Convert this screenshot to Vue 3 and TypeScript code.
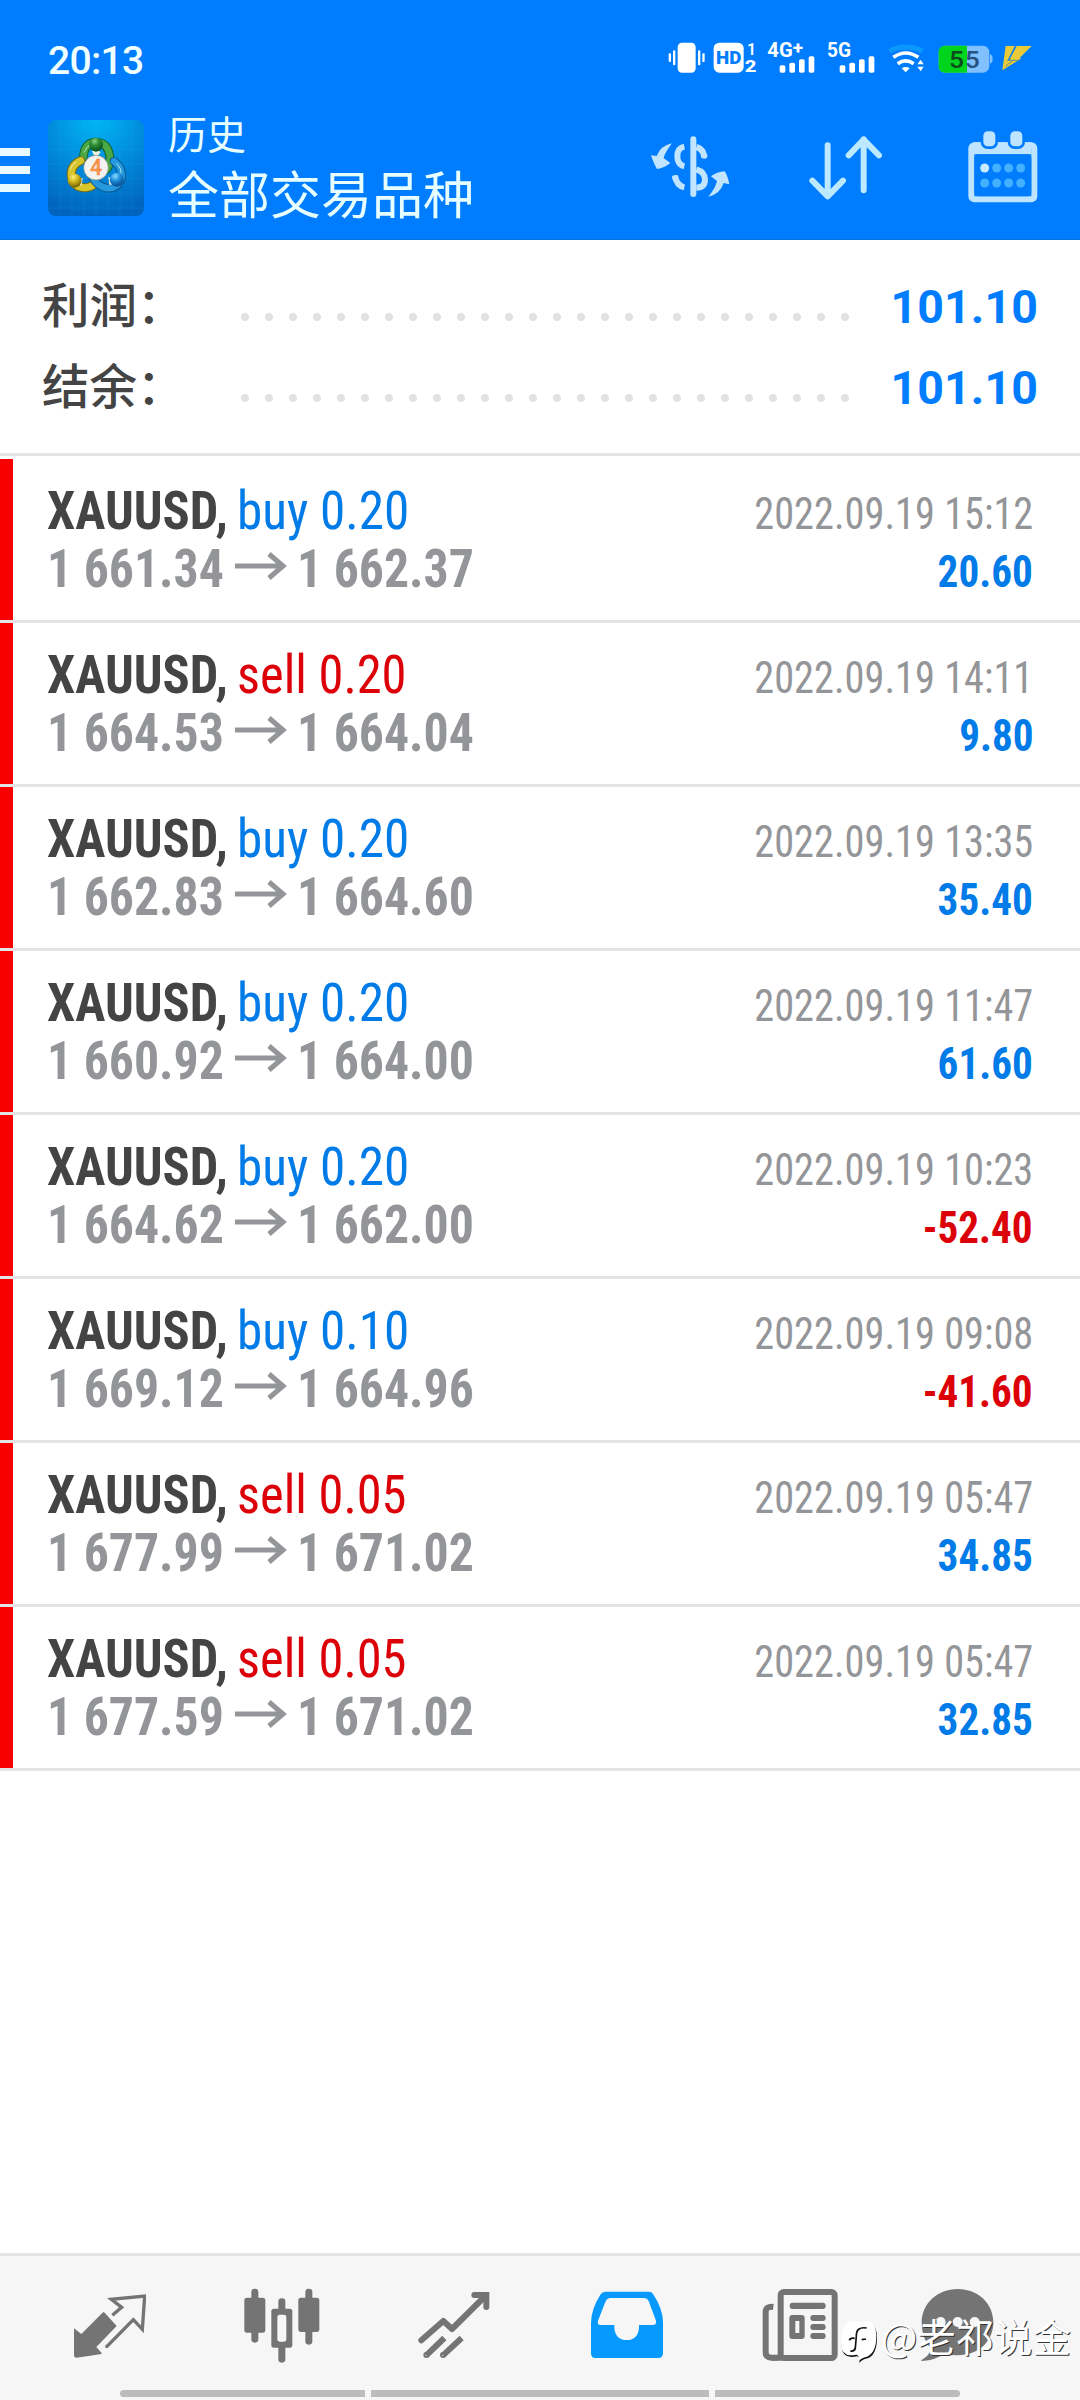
<script setup lang="ts">
interface Deal {
  side: 'buy' | 'sell'
  volume: string
  open: string
  close: string
  time: string
  profit: string
}

const deals: Deal[] = [
  { side: 'buy', volume: '0.20', open: '1 661.34', close: '1 662.37', time: '2022.09.19 15:12', profit: '20.60' },
  { side: 'sell', volume: '0.20', open: '1 664.53', close: '1 664.04', time: '2022.09.19 14:11', profit: '9.80' },
  { side: 'buy', volume: '0.20', open: '1 662.83', close: '1 664.60', time: '2022.09.19 13:35', profit: '35.40' },
  { side: 'buy', volume: '0.20', open: '1 660.92', close: '1 664.00', time: '2022.09.19 11:47', profit: '61.60' },
  { side: 'buy', volume: '0.20', open: '1 664.62', close: '1 662.00', time: '2022.09.19 10:23', profit: '-52.40' },
  { side: 'buy', volume: '0.10', open: '1 669.12', close: '1 664.96', time: '2022.09.19 09:08', profit: '-41.60' },
  { side: 'sell', volume: '0.05', open: '1 677.99', close: '1 671.02', time: '2022.09.19 05:47', profit: '34.85' },
  { side: 'sell', volume: '0.05', open: '1 677.59', close: '1 671.02', time: '2022.09.19 05:47', profit: '32.85' },
]

const totals = [
  { label: '利润', value: '101.10' },
  { label: '结余', value: '101.10' },
]

const calendarDots = [1093, 1129, 1165, 1201]
</script>

<template>
  <div class="screen">
    <header class="header">
      <div class="status">
        <span class="clock">20:13</span>
        <svg class="status-icons" width="366" height="54" viewBox="145 34 1098 162">
          <g fill="#fff">
            <rect x="174" y="69" width="54" height="90" rx="13" />
            <rect x="160" y="92" width="7" height="45" rx="3" />
            <rect x="147" y="101" width="7" height="26" rx="3" />
            <rect x="235" y="92" width="7" height="45" rx="3" />
            <rect x="248" y="101" width="7" height="26" rx="3" />
            <rect x="282" y="69" width="90" height="90" rx="17" />
            <rect x="480" y="137" width="17" height="22" rx="5" />
            <rect x="509" y="129" width="17" height="30" rx="5" />
            <rect x="538" y="119" width="17" height="40" rx="5" />
            <rect x="567" y="110" width="17" height="49" rx="5" />
            <rect x="660" y="137" width="17" height="22" rx="5" />
            <rect x="689" y="129" width="17" height="30" rx="5" />
            <rect x="718" y="119" width="17" height="40" rx="5" />
            <rect x="747" y="110" width="17" height="49" rx="5" />
            <path d="M846 146q12-8 24 0l-12 12zM893 134h19l-9-14zM893 141h19l-9 14z" />
          </g>
          <g class="glyph" fill="#fff">
            <text x="289" y="134" fill="#007dff" font-size="56" font-weight="900" textLength="76" lengthAdjust="spacingAndGlyphs">HD</text>
            <text x="382" y="105" font-size="50" font-weight="600" textLength="27" lengthAdjust="spacingAndGlyphs">1</text>
            <text x="375" y="156" font-size="50" font-weight="800" textLength="35" lengthAdjust="spacingAndGlyphs">2</text>
            <text x="443" y="113" font-size="60" font-weight="700" textLength="76" lengthAdjust="spacingAndGlyphs">4G</text>
            <text x="519" y="100" font-size="48" font-weight="800" textLength="31" lengthAdjust="spacingAndGlyphs">+</text>
            <text x="622" y="113" font-size="60" font-weight="700" textLength="72" lengthAdjust="spacingAndGlyphs">5G</text>
          </g>
          <g fill="none" stroke="#fff" stroke-width="11">
            <path d="M821 113q37-26 75 0" />
            <path d="M834 132q24-17 48 0" />
          </g>
          <path d="M809 94q49-24 100 0" fill="none" stroke="#0a98ff" stroke-width="15" />
          <rect x="957" y="78" width="152" height="81" rx="20" fill="#80c0ff" />
          <path d="M1111 104q8 2 8 14t-8 14z" fill="#80c0ff" />
          <path d="M1042 78h-65q-20 0-20 20v41q0 20 20 20h65z" fill="#00d41c" />
          <text class="glyph" x="988" y="146" font-size="74" font-weight="500" fill="#0d4a20" textLength="45" lengthAdjust="spacingAndGlyphs">5</text>
          <text class="glyph" x="1035" y="146" font-size="74" font-weight="500" fill="#27527f" textLength="45" lengthAdjust="spacingAndGlyphs">5</text>
          <path d="M1158 79h27l-21 43h9l-25 30zM1191 79h45l-37 37h7l-58 36 26-33h-4z" fill="#e9cb3a" />
          <path d="M1162 122h36M1158 140l22-18" fill="none" stroke="#5f8f8a" stroke-width="3" />
        </svg>
      </div>

      <div class="toolbar">
        <div class="menu"><i></i><i></i><i></i></div>
        <svg class="logo" width="96" height="96" viewBox="144 60 288 288">
          <defs>
            <radialGradient id="tile" cx=".5" cy="0" r="1">
              <stop offset="0" stop-color="#00b6f4" />
              <stop offset=".5" stop-color="#008bdc" />
              <stop offset="1" stop-color="#0064bd" />
            </radialGradient>
            <radialGradient id="green" cx=".4" cy=".25" r=".7">
              <stop offset="0" stop-color="#8fd688" />
              <stop offset=".4" stop-color="#329337" />
              <stop offset="1" stop-color="#0b5522" />
            </radialGradient>
            <radialGradient id="gold" cx=".4" cy=".25" r=".7">
              <stop offset="0" stop-color="#fff37c" />
              <stop offset=".5" stop-color="#ceb318" />
              <stop offset="1" stop-color="#78680a" />
            </radialGradient>
            <radialGradient id="azure" cx=".4" cy=".25" r=".7">
              <stop offset="0" stop-color="#8bdcff" />
              <stop offset=".5" stop-color="#1c8ed8" />
              <stop offset="1" stop-color="#075094" />
            </radialGradient>
          </defs>
          <rect x="144" y="60" width="288" height="288" rx="24" fill="url(#tile)" />
          <path d="M180 60v288M216 60v288M252 60v288M288 60v288M324 60v288M360 60v288M396 60v288M144 104h288M144 148h288M144 192h288M144 236h288M144 280h288M144 324h288" stroke="#35b7eb" stroke-opacity=".2" stroke-width="2" />
          <g fill="none" stroke-linecap="round">
            <path d="M250 172q2-43 37-46 38 1 43 47 0 20-10 35" stroke="#12632c" stroke-width="26" />
            <path d="M250 172q2-43 37-46 38 1 43 47 0 20-10 35" stroke="#4aa845" stroke-width="20" />
            <path d="M242 182q-31 14-28 47 7 35 44 34 12-1 20-7" stroke="#746b13" stroke-width="27" />
            <path d="M242 182q-31 14-28 47 7 35 44 34 12-1 20-7" stroke="#d8c52c" stroke-width="21" />
            <path d="M342 184q27 19 22 52-12 32-46 28-26-6-39-30" stroke="#0b5891" stroke-width="26" />
            <path d="M342 184q27 19 22 52-12 32-46 28-26-6-39-30" stroke="#2598de" stroke-width="20" />
            <path d="M253 156q10-22 24-24M211 208q4-16 18-22M350 191q15 15 13 28" stroke="#e6ffe8" stroke-opacity=".7" stroke-width="3" />
          </g>
          <path d="M276 154l12-8 14 11-9 10h-10zM234 235l14 0-3 22-13-4zM325 231l13 3 6 20-16 0z" fill="#edf3db" />
          <circle cx="288" cy="134" r="21" fill="url(#green)" />
          <circle cx="224" cy="242" r="21" fill="url(#gold)" />
          <circle cx="350" cy="239" r="21" fill="url(#azure)" />
          <circle cx="288" cy="203" r="37" fill="#f3f3f1" stroke="#7d8872" stroke-width="2" />
          <text class="glyph" x="270" y="224" font-size="64" font-weight="500" fill="#ff994d" stroke="#e77834" textLength="36" lengthAdjust="spacingAndGlyphs">4</text>
        </svg>
        <div class="titles">
          <span class="section">历史</span>
          <span class="symbols">全部交易品种</span>
        </div>
        <svg class="act currency" width="80" height="62" viewBox="92 346 240 186" fill="#c1e5ff">
          <path d="M92 404l17 2q12-31 46-38-22 29-25 44l20 15q-18 15-40 18-8-12-18-41z" />
          <path d="M327 491l-17-4q-11 34-46 41 23-28 26-47l-18-14q18-14 41-15 9 13 14 39z" />
          <rect x="210" y="347" width="18" height="182" rx="9" />
          <g fill="none" stroke="#c1e5ff" stroke-width="18">
            <path d="M192 378q-21 4-21 29t21 30M192 500q-24-5-28-35M228 379q22 6 24 32M228 446q26 8 26 31t-26 24" />
          </g>
          <circle cx="252" cy="405" r="9" /><circle cx="165" cy="472" r="9" />
        </svg>
        <svg class="act sort" width="74" height="64" viewBox="568 346 222 192" fill="none" stroke="#bde9ff" stroke-width="18" stroke-linecap="round" stroke-linejoin="round">
          <path d="M624 374v153M578 480l46 47 46-47M732 509V356M687 404l45-47 46 47" />
        </svg>
        <svg class="act calendar" width="70" height="72" viewBox="1043 332 210 216">
          <rect x="1053" y="375" width="189" height="162" rx="9" fill="none" stroke="#bfe4ff" stroke-width="18" />
          <path d="M1060 366h174v36H1060z" fill="#bfe4ff" />
          <rect x="1062" y="402" width="171" height="126" rx="12" fill="#007dff" />
          <rect x="1085" y="329" width="44" height="53" rx="17" fill="#bfe4ff" stroke="#007dff" stroke-width="8" />
          <rect x="1166" y="329" width="44" height="53" rx="17" fill="#bfe4ff" stroke="#007dff" stroke-width="8" />
          <g fill="#43b1ff">
            <circle v-for="x in calendarDots" :key="x" :cx="x" cy="443" r="13.5" :fill="x === 1093 ? '#c7ecff' : '#43b1ff'" />
            <circle v-for="x in calendarDots" :key="-x" :cx="x" cy="488" r="13.5" />
          </g>
        </svg>
      </div>
    </header>

    <section class="totals">
      <div v-for="t in totals" :key="t.label" class="total">
        <span class="total-label">{{ t.label }}：</span>
        <span class="leader"></span>
        <span class="total-value">{{ t.value }}</span>
      </div>
    </section>

    <ul class="deals">
      <li v-for="(d, i) in deals" :key="i" class="deal">
        <div class="left">
          <div class="line">
            <b class="symbol">XAUUSD,</b>
            <span class="side" :class="d.side">{{ d.side }} {{ d.volume }}</span>
          </div>
          <div class="line prices">
            <span class="open">{{ d.open }}</span>
            <svg class="arrow" width="52" height="28" viewBox="0 0 52 28" fill="none" stroke="#949598" stroke-width="5">
              <path d="M0 14h48M34 2l14 12-14 12" />
            </svg>
            <span class="close">{{ d.close }}</span>
          </div>
        </div>
        <div class="right">
          <span class="time">{{ d.time }}</span>
          <span class="profit" :class="{ loss: d.profit.startsWith('-') }">{{ d.profit }}</span>
        </div>
      </li>
    </ul>

    <nav class="tabs">
      <svg class="tab quotes" width="72" height="64" viewBox="222 163 216 192">
        <path d="M309 218q3-1 5 1l36 40-61 63 16 18q0 4-5 4l-70 10q-8 0-8-8v-80l22 17z" fill="#747474" />
        <path d="M337 227l28-24-31-24 100-10-7 100-27-29-79 80h-5" fill="none" stroke="#747474" stroke-width="10" />
      </svg>
      <svg class="tab charts" width="76" height="76" viewBox="731 145 228 228" fill="#747474">
        <rect x="732" y="174" width="63" height="105" rx="8" /><rect x="753" y="147" width="21" height="162" rx="10" />
        <rect x="894" y="174" width="63" height="103" rx="8" /><rect x="915" y="147" width="21" height="168" rx="10" />
        <rect x="834" y="176" width="21" height="193" rx="10" /><rect x="813" y="207" width="63" height="117" rx="8" />
        <rect x="831" y="225" width="27" height="81" rx="7" fill="#f6f6f6" />
      </svg>
      <svg class="tab trade" width="72" height="68" viewBox="173 153 216 204" fill="none" stroke="#747474" stroke-width="18">
        <path d="M183 301l66-58 26 24 100-99" stroke-linejoin="round" stroke-linecap="round" />
        <path d="M342 165h36v36" stroke-linecap="round" stroke-linejoin="miter" />
        <path d="M198 346l54-52M248 346l56-52" />
        <circle cx="198" cy="345" r="3" stroke-width="12" /><circle cx="248" cy="345" r="3" stroke-width="12" />
      </svg>
      <svg class="tab history" width="74" height="68" viewBox="689 153 222 204">
        <path d="M735 155h131q8 0 12 7 30 44 30 86v92q0 14-14 14H705q-13 0-13-14v-90q0-42 29-87 5-8 14-8z" fill="#069aff" />
        <path d="M751 174h98q12 0 16 9l22 59q2 13-10 13h-41v8q-3 37-37 37t-37-37v-8h-41q-11 0-8-13l22-56q5-12 16-12z" fill="#f6f6f6" />
      </svg>
      <svg class="tab news" width="76" height="74" viewBox="126 144 228 222">
        <path d="M160 201q-23-3-23 16v119q0 17 17 17h30" fill="none" stroke="#747474" stroke-width="18" />
        <rect x="182" y="156" width="162" height="198" rx="10" fill="none" stroke="#747474" stroke-width="18" />
        <g fill="#747474">
          <path d="M154 345h20v17h-20z" />
          <rect x="209" y="188" width="108" height="19" rx="9" />
          <rect x="271" y="225" width="46" height="18" rx="9" /><rect x="271" y="252" width="46" height="18" rx="9" /><rect x="271" y="279" width="46" height="18" rx="9" />
          <path fill-rule="evenodd" d="M217 225h28q9 0 9 9v54q0 9-9 9h-28q-9 0-9-9v-54q0-9 9-9zM226 243v36h12v-36z" />
        </g>
      </svg>
      <svg class="tab chat" width="74" height="74" viewBox="604 144 222 222">
        <path d="M714 147c61 0 107 43 107 100s-44 99-107 99q-23 0-39-5-25 18-68 22-5 0 2-5 20-12 25-32-28-30-28-78c0-58 48-101 108-101z" fill="#747474" />
        <g fill="#f6f6f6"><circle cx="663" cy="246" r="15" /><circle cx="714" cy="246" r="15" /><circle cx="765" cy="246" r="15" /></g>
      </svg>
    </nav>

    <div class="home"><i></i><i></i><i></i></div>

    <div class="watermark">
      <svg width="40" height="46" viewBox="358 238 120 138">
        <path d="M393 243q22 6 50 0 24 8 24 46 0 50-28 62-12 1-25 13 2-18-7-19-45 10-46-31 0-64 32-71z" fill="#111" transform="translate(2 5)" />
        <path d="M393 243q22 6 50 0 24 8 24 46 0 50-28 62-12 1-25 13 2-18-7-19-45 10-46-31 0-64 32-71z" fill="#fff" />
        <path d="M438 265q-32-5-31 25l-3 35q-2 11-15 9M386 302q2-8 16-6M423 300l13-2" fill="none" stroke="#111" stroke-width="5" />
      </svg>
      <span>@老祁说金</span>
    </div>
  </div>
</template>

<style>
body {
  margin: 0;
  background: #fff;
}
</style>

<style scoped>
.screen {
  position: relative;
  display: flex;
  flex-direction: column;
  width: 1080px;
  height: 2400px;
  overflow: hidden;
  background: #fff;
  font-family: Roboto, "Noto Sans CJK SC", sans-serif;
  white-space: nowrap;
}
svg { display: block; flex: none; }
.glyph { font-family: Roboto, sans-serif; }
.header {
  box-sizing: border-box;
  height: 240px;
  background: #007dff;
  border-bottom: 1px solid #0671d8;
}
.status {
  display: flex;
  justify-content: space-between;
  align-items: flex-start;
  height: 112px;
  padding: 0 46px 0 48px;
  box-sizing: border-box;
}
.clock {
  margin-top: 38px;
  color: #f0ffff;
  font-size: 39px;
  line-height: 46px;
  font-weight: 500;
  letter-spacing: -0.7px;
}
.status-icons { margin-top: 31px; }
.toolbar { display: flex; align-items: flex-start; }
.menu {
  display: flex;
  flex-direction: column;
  gap: 10px;
  width: 30px;
  margin-top: 36px;
}
.menu i { height: 8px; background: #e8faff; }
.logo { margin: 8px 0 0 18px; }
.titles {
  display: flex;
  flex-direction: column;
  width: 483px;
  height: 120px;
  margin: -3px 0 0 24px;
  color: #e6feff;
  font-family: "Noto Sans CJK SC", sans-serif;
  font-weight: 400;
}
.section { font-size: 39px; line-height: 46px; }
.symbols { margin-top: 7px; font-size: 51px; line-height: 60px; }
.currency { margin-top: 24px; }
.sort { margin: 24px 0 0 78px; }
.calendar { margin: 19px 0 0 85px; }

.totals {
  box-sizing: border-box;
  height: 216px;
  padding: 27px 42px 0 42px;
  border-bottom: 3px solid #e4e4e4;
}
.total { display: flex; height: 81px; }
.total-label {
  width: 199px;
  color: #444;
  font: 500 47.5px/72px "Noto Sans CJK SC", sans-serif;
}
.leader {
  width: 624px;
  height: 24px;
  margin: 38px 0 0 -8px;
  background: radial-gradient(circle at center, #e2e2e2 3.6px, transparent 4.4px) 0 0 / 24px 24px;
}
.total-value {
  margin-left: auto;
  color: #007dff;
  font-size: 46.5px;
  font-weight: 700;
  line-height: 80px;
  letter-spacing: 0.1px;
}

.deals { margin: 3px 0 0; padding: 0; list-style: none; }
.deal {
  box-sizing: border-box;
  display: flex;
  justify-content: space-between;
  height: 164px;
  padding: 23px 47px 0 47px;
  background: linear-gradient(#f70000, #f70000) 0 0 / 13px 161px no-repeat;
  border-bottom: 3px solid #e4e4e4;
  font-stretch: 75%;
}
.line { display: flex; height: 58px; font-size: 54px; line-height: 58px; }
.symbol,
.side,
.open,
.close { transform-origin: 0 50%; }
.symbol { width: 190px; color: #444; transform: scaleX(0.935); }
.side { transform: scaleX(0.948); }
.side.buy { color: #007be8; }
.side.sell { color: #dc0008; transform: scaleX(0.935); }
.prices { color: #949598; font-weight: 700; }
.open { width: 188px; transform: scaleX(0.922); }
.arrow { margin-top: 12px; }
.close { margin-left: 10px; transform: scaleX(0.922); }
.right { display: flex; flex-direction: column; align-items: flex-end; }
.time,
.profit {
  height: 58px;
  padding-top: 3px;
  box-sizing: border-box;
  font-size: 44px;
  line-height: 58px;
  transform-origin: 100% 50%;
}
.time { color: #949598; transform: scaleX(0.917); }
.profit { color: #007be8; font-weight: 700; transform: scaleX(0.935); }
.profit.loss { color: #dc0008; }

.tabs {
  box-sizing: border-box;
  display: flex;
  align-items: flex-start;
  height: 137px;
  margin-top: auto;
  border-top: 3px solid #e4e4e4;
  background: #f6f6f6;
}
.quotes { margin: 38px 0 0 74px; }
.charts { margin: 32px 0 0 98px; }
.trade { margin: 35px 0 0 98px; }
.history { margin: 35px 0 0 100px; }
.news { margin: 32px 0 0 98px; }
.chat { margin: 32px 0 0 83px; }
.home {
  display: flex;
  gap: 6px;
  height: 10px;
  padding-left: 120px;
  background: #f6f6f6;
}
.home i { width: 245px; height: 7px; background: #bcbcbc; border-radius: 4px 0 0 4px; }
.home i:nth-child(2) { width: 338px; border-radius: 0; }
.home i:nth-child(3) { border-radius: 0 4px 4px 0; }
.watermark {
  position: absolute;
  left: 840px;
  top: 2319px;
  display: flex;
  gap: 1px;
  color: #fff;
  font: 400 38.4px/32px "Noto Sans CJK SC", sans-serif;
  text-shadow: 1px 1px 0 #333;
}
</style>
